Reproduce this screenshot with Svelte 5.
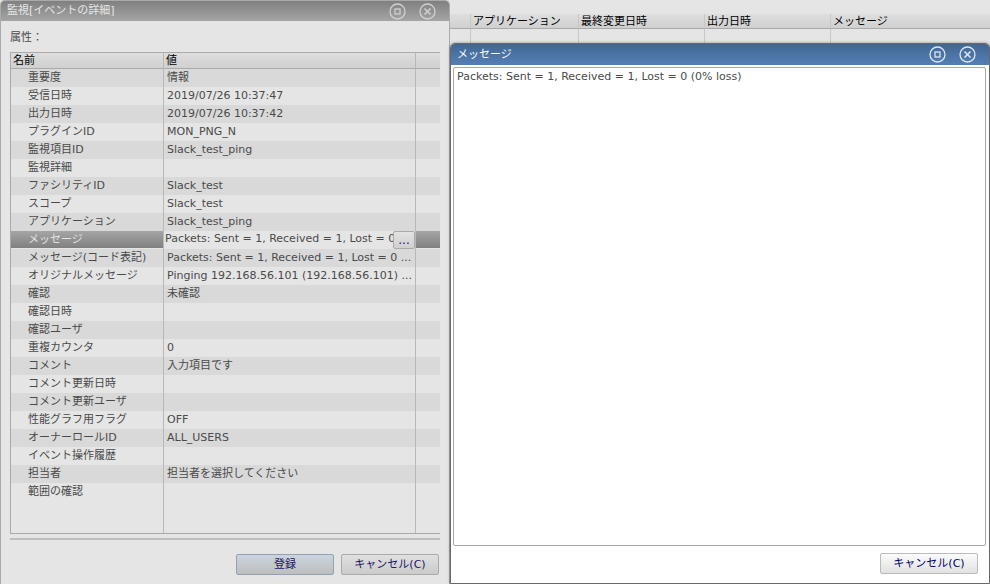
<script lang="ts">
  type Property = { name: string; value: string; editing?: boolean };

  const message = 'Packets: Sent = 1, Received = 1, Lost = 0 (0% loss)';

  const properties: Property[] = [
    { name: '重要度', value: '情報' },
    { name: '受信日時', value: '2019/07/26 10:37:47' },
    { name: '出力日時', value: '2019/07/26 10:37:42' },
    { name: 'プラグインID', value: 'MON_PNG_N' },
    { name: '監視項目ID', value: 'Slack_test_ping' },
    { name: '監視詳細', value: '' },
    { name: 'ファシリティID', value: 'Slack_test' },
    { name: 'スコープ', value: 'Slack_test' },
    { name: 'アプリケーション', value: 'Slack_test_ping' },
    { name: 'メッセージ', value: message, editing: true },
    { name: 'メッセージ(コード表記)', value: 'Packets: Sent = 1, Received = 1, Lost = 0 ...' },
    { name: 'オリジナルメッセージ', value: 'Pinging 192.168.56.101 (192.168.56.101) ...' },
    { name: '確認', value: '未確認' },
    { name: '確認日時', value: '' },
    { name: '確認ユーザ', value: '' },
    { name: '重複カウンタ', value: '0' },
    { name: 'コメント', value: '入力項目です' },
    { name: 'コメント更新日時', value: '' },
    { name: 'コメント更新ユーザ', value: '' },
    { name: '性能グラフ用フラグ', value: 'OFF' },
    { name: 'オーナーロールID', value: 'ALL_USERS' },
    { name: 'イベント操作履歴', value: '' },
    { name: '担当者', value: '担当者を選択してください' },
    { name: '範囲の確認', value: '' }
  ];

  const eventColumns = ['', 'アプリケーション', '最終変更日時', '出力日時', 'メッセージ'];

  let messageText = $state(message);
</script>

{#snippet windowControls()}
  <div class="controls">
    <button class="control" aria-label="最大化">
      <svg viewBox="0 0 17 17" width="17" height="17" fill="none" stroke="currentColor">
        <circle cx="8.5" cy="8.5" r="7.5" stroke-width="1.3" />
        <rect x="6" y="6" width="5" height="5" stroke-width="1.3" />
      </svg>
    </button>
    <button class="control" aria-label="閉じる">
      <svg viewBox="0 0 17 17" width="17" height="17" fill="none" stroke="currentColor">
        <circle cx="8.5" cy="8.5" r="7.5" stroke-width="1.3" />
        <path d="M5.5 5.5l6 6M11.5 5.5l-6 6" stroke-width="1.6" />
      </svg>
    </button>
  </div>
{/snippet}

<div class="desktop">
  <table class="events">
    <thead>
      <tr>
        {#each eventColumns as column}
          <th>{column}</th>
        {/each}
      </tr>
    </thead>
    <tbody>
      <tr>
        {#each eventColumns as _}
          <td></td>
        {/each}
      </tr>
    </tbody>
  </table>

  <section class="window detail">
    <header class="titlebar">
      <span>監視[イベントの詳細]</span>
      {@render windowControls()}
    </header>
    <div class="body">
      <div class="caption">属性：</div>
      <div class="tree">
        <table class="properties">
          <thead>
            <tr><th class="name">名前</th><th>値</th><th class="rest"></th></tr>
          </thead>
          <tbody>
            {#each properties as property}
              <tr class:selected={property.editing}>
                <td class="name">{property.name}</td>
                {#if property.editing}
                  <td class="editor">
                    <div class="editor-row">
                      <input type="text" aria-label={property.name} bind:value={messageText} />
                      <button class="more">...</button>
                    </div>
                  </td>
                {:else}
                  <td>{property.value}</td>
                {/if}
                <td class="rest"></td>
              </tr>
            {/each}
            <tr class="filler"><td></td><td></td><td class="rest"></td></tr>
          </tbody>
        </table>
      </div>
      <hr />
      <footer>
        <button class="btn primary">登録</button>
        <button class="btn">キャンセル(C)</button>
      </footer>
    </div>
  </section>

  <section class="window message">
    <header class="titlebar">
      <span>メッセージ</span>
      {@render windowControls()}
    </header>
    <div class="body">
      <textarea aria-label="メッセージ" spellcheck="false" bind:value={messageText}></textarea>
      <footer>
        <button class="btn">キャンセル(C)</button>
      </footer>
    </div>
  </section>
</div>

<style>
  :global(body) {
    background: #e5e5e5;
  }

  .desktop,
  button,
  input,
  textarea {
    font-family: 'DejaVu Sans', 'Noto Sans CJK JP', sans-serif;
    font-size: 11px;
    line-height: 16px;
  }

  .desktop {
    position: relative;
    box-sizing: border-box;
    height: 100vh;
    padding-top: 14px;
    overflow: hidden;
    background: #e5e5e5;
    color: #4a4a4a;
  }

  table {
    width: 100%;
    table-layout: fixed;
    border-spacing: 0;
  }

  th,
  td {
    box-sizing: border-box;
    padding: 0 3px;
    border-right: 1px solid #b8b8b8;
    text-align: left;
    font-weight: normal;
    white-space: nowrap;
    overflow: hidden;
    line-height: 14px;
  }

  th {
    height: 15px;
    background: linear-gradient(#dedede, #d0d0d0);
    border-bottom: 1px solid #aaa;
    color: #000;
  }

  .events th,
  .events td {
    width: 126px;
    padding: 2px 2px 0;
    line-height: 12px;
    border-right-color: #c8c8c8;
  }

  .events th:first-child {
    width: 471px;
  }

  .events th:nth-child(2) {
    width: 108px;
  }

  .events th:last-child,
  .events td:last-child {
    width: auto;
    border-right: none;
  }

  .events td {
    height: 100vh;
  }

  .window {
    position: absolute;
    bottom: 0;
    box-sizing: border-box;
    display: flex;
    flex-direction: column;
  }

  .detail {
    top: 0;
    left: 0;
    width: 450px;
    background: #e5e5e5;
    border: 1px solid #aaa;
    border-bottom: none;
    border-radius: 5px 5px 0 0;
  }

  .message {
    top: 43px;
    left: 450px;
    right: 0;
    background: #fff;
    border: 1px solid #686868;
    border-radius: 5px 5px 0 0;
    box-shadow: 0 0 3px rgba(0, 0, 0, 0.4);
  }

  .titlebar {
    display: flex;
    align-items: center;
    justify-content: space-between;
    height: 20px;
    padding: 0 13px 0 6px;
    border-radius: 4px 4px 0 0;
    background: linear-gradient(#808080, #a5a5a5);
    color: #e5e5e5;
  }

  .message .titlebar {
    height: 21px;
    background: linear-gradient(#416693, #5580b5);
    color: #fff;
  }

  .controls {
    display: flex;
    gap: 13px;
  }

  .control {
    display: flex;
    padding: 0;
    border: none;
    background: none;
    color: #d0d0d0;
  }

  .message .control {
    color: #dce6f2;
  }

  .body {
    flex: 1;
    min-height: 0;
    display: flex;
    flex-direction: column;
  }

  .detail .body {
    padding: 9px 9px 9px;
  }

  .message .body {
    padding: 2px 3px 9px 2px;
  }

  .caption {
    height: 22px;
  }

  .tree {
    flex: 1;
    min-height: 0;
    border: 1px solid #aaa;
    border-right: none;
  }

  .properties {
    height: 100%;
  }

  .properties th {
    height: 16px;
    padding: 1px 2px 0;
  }

  .properties th.name {
    width: 153px;
  }

  .properties th.rest {
    width: 24px;
  }

  .properties .rest {
    border-right: none;
  }

  .properties td {
    height: 18px;
    line-height: 16px;
  }

  .properties td.name {
    padding-left: 17px;
  }

  .properties tbody tr:nth-child(odd) {
    background: #d9d9d9;
  }

  .properties tbody tr.filler:last-child {
    background: none;
  }

  .properties .filler td {
    height: auto;
  }

  .properties .selected td {
    background: linear-gradient(#a5a5a5, #808080 17px, #e5e5e5 17px);
    color: #e5e5e5;
  }

  .properties .selected .editor {
    padding: 0;
    background: #e5e5e5;
  }

  .editor-row {
    display: flex;
    height: 18px;
  }

  input {
    flex: 1;
    min-width: 0;
    box-sizing: border-box;
    padding: 0 0 3px 1px;
    border: none;
    background: #e5e5e5;
    color: #4a4a4a;
  }

  .more {
    width: 22px;
    padding: 0;
    border: 1px solid #aaa;
    border-radius: 2px;
    background: linear-gradient(#e3e3e3, #cfcfcf);
    color: #1c1466;
    font-size: 12px;
  }

  hr {
    width: 100%;
    height: 2px;
    margin: 4px 0 14px;
    border: none;
    background: #bebebe;
  }

  footer {
    display: flex;
    justify-content: flex-end;
    gap: 7px;
  }

  .detail footer {
    padding-right: 1px;
  }

  .message footer {
    padding: 7px 8px 0 0;
  }

  .btn {
    box-sizing: border-box;
    width: 98px;
    height: 21px;
    padding: 0;
    border: 1px solid #aaa;
    border-radius: 2px;
    background: linear-gradient(#e0e0e0, #cbcbcb);
    color: #1c1466;
  }

  .btn.primary {
    border-color: #8fa3b8;
    background: linear-gradient(#cbd4df, #bebebe);
  }

  .message .btn {
    border-color: #bbb;
    background: linear-gradient(#fbfbfb, #e2e2e2);
    color: #00006b;
  }

  textarea {
    flex: 1;
    box-sizing: border-box;
    padding: 1px 3px;
    border: 1px solid #a6a6a6;
    border-radius: 2px;
    resize: none;
    outline: none;
    background: #fff;
    color: #4a4a4a;
  }
</style>
